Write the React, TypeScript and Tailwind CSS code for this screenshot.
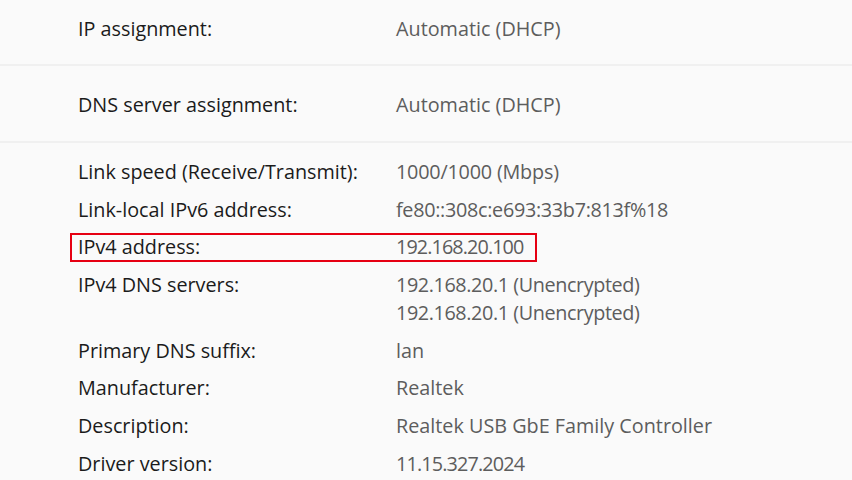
type InfoRow = {
  label: string;
  values: string[];
  // digits in the fallback font run wider than the original, pull them in a bit
  tight?: string;
  highlight?: boolean;
};

const rows: InfoRow[] = [
  { label: "Link speed (Receive/Transmit):", values: ["1000/1000 (Mbps)"], tight: "tracking-[-0.2px]" },
  {
    label: "Link-local IPv6 address:",
    values: ["fe80::308c:e693:33b7:813f%18"],
    tight: "tracking-[-0.3px]",
  },
  { label: "IPv4 address:", values: ["192.168.20.100"], tight: "tracking-[-0.9px]", highlight: true },
  {
    label: "IPv4 DNS servers:",
    values: ["192.168.20.1 (Unencrypted)", "192.168.20.1 (Unencrypted)"],
    tight: "tracking-[-0.4px]",
  },
  { label: "Primary DNS suffix:", values: ["lan"] },
  { label: "Manufacturer:", values: ["Realtek"] },
  { label: "Description:", values: ["Realtek USB GbE Family Controller"] },
  { label: "Driver version:", values: ["11.15.327.2024"], tight: "tracking-[-0.85px]" },
];

const Row = ({ label, values, tight, highlight }: InfoRow) => (
  <div className="relative flex">
    {highlight && (
      <div className="absolute -left-[8px] top-0 h-[29px] w-[467px] border-2 border-[#e60012]" />
    )}
    <div className="w-[318px] shrink-0 text-[#1b1b1b]">{label}</div>
    <div className={`flex flex-col text-[#5d5d5d] ${tight ?? ""}`}>
      {values.map((v, i) => (
        <span key={i}>{v}</span>
      ))}
    </div>
  </div>
);

const App = () => {
  return (
    <div
      className="h-[480px] w-[852px] overflow-hidden bg-[#fafafa] text-[19.8px] leading-[28px]"
      style={{ fontFamily: '"Open Sans", sans-serif' }}
    >
      <div className="flex h-[64px] px-[78px] pt-[15px]">
        <div className="w-[318px] text-[#1b1b1b]">IP assignment:</div>
        <div className="text-[#5d5d5d]">Automatic (DHCP)</div>
      </div>
      <div className="h-[2px] bg-[#f0f0f0]" />
      <div className="flex h-[75px] px-[78px] pt-[25px]">
        <div className="w-[318px] text-[#1b1b1b]">DNS server assignment:</div>
        <div className="text-[#5d5d5d]">Automatic (DHCP)</div>
      </div>
      <div className="h-[2px] bg-[#f0f0f0]" />
      <div className="flex flex-col gap-[9.7px] px-[78px] pt-[15px]">
        {rows.map((r) => (
          <Row key={r.label} {...r} />
        ))}
      </div>
    </div>
  );
};

export default App;
